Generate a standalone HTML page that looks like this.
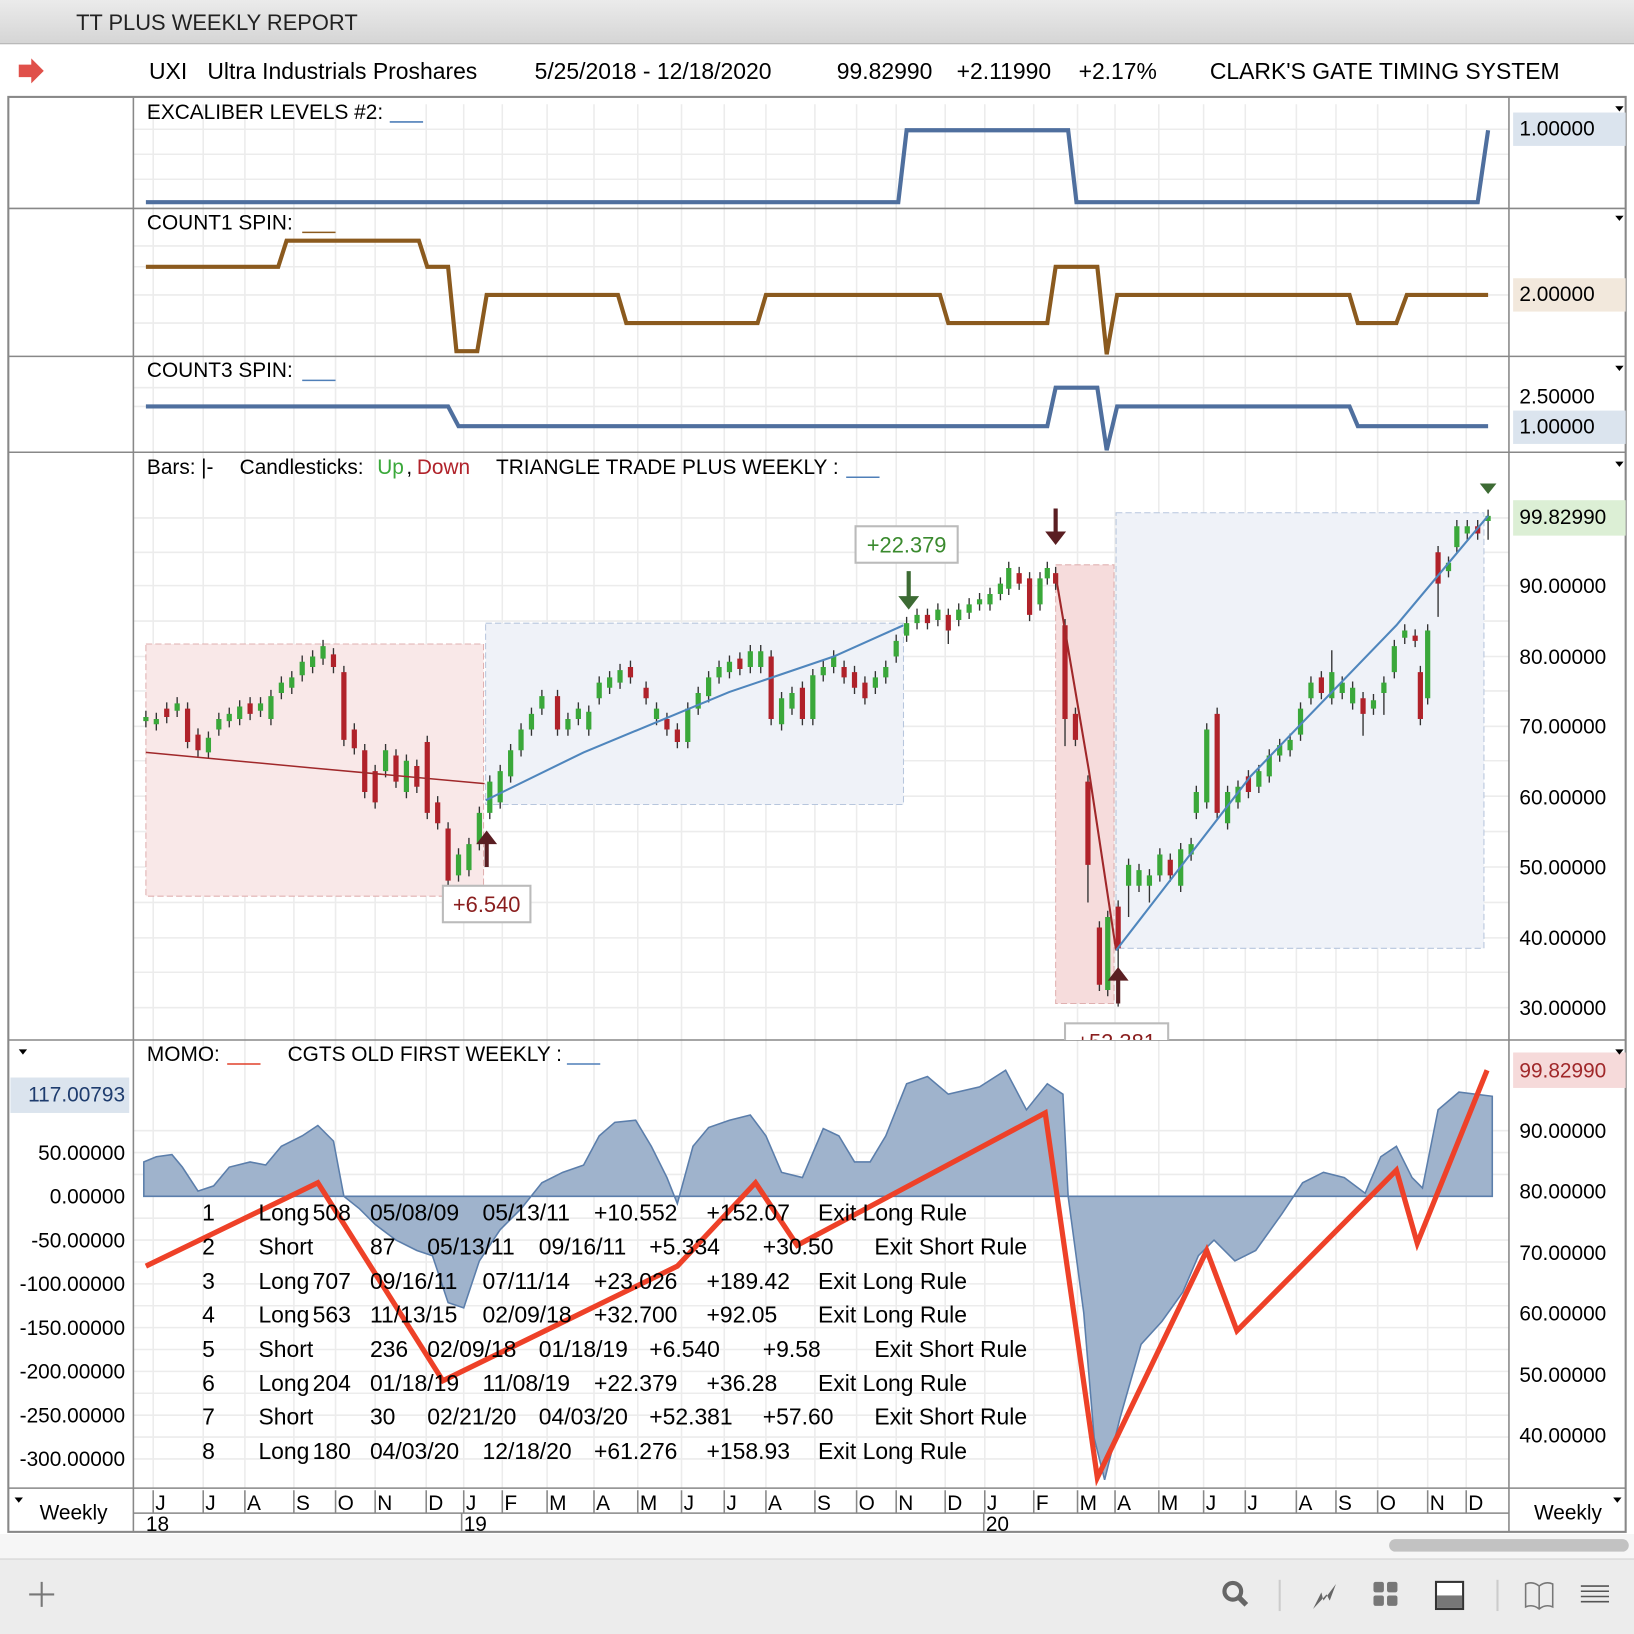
<!DOCTYPE html>
<html><head><meta charset="utf-8"><style>
html,body{margin:0;padding:0;background:#fff;}
svg{display:block;font-family:"Liberation Sans",Arial,sans-serif;}
</style></head><body>
<svg width="1634" height="1634" viewBox="0 0 1568 1568" xmlns="http://www.w3.org/2000/svg">
<defs><linearGradient id="tb" x1="0" y1="0" x2="0" y2="1"><stop offset="0" stop-color="#ebebeb"/><stop offset="1" stop-color="#d5d5d5"/></linearGradient>
<clipPath id="mc"><rect x="129" y="436" width="1319" height="562"/></clipPath></defs>
<rect x="0" y="0" width="1568" height="1568" fill="#fff"/>
<rect x="0" y="0" width="1568" height="42" fill="url(#tb)"/>
<line x1="0" y1="42" x2="1568" y2="42" stroke="#b0b0b0"/>
<text x="73" y="29" font-size="21" fill="#222">TT PLUS WEEKLY REPORT</text>
<path d="M18 62h12v-6l12 12-12 12v-6h-12z" fill="#e0504a"/>
<g font-size="22" fill="#000">
<text x="143" y="76">UXI</text><text x="199" y="76">Ultra Industrials Proshares</text>
<text x="513" y="76">5/25/2018 - 12/18/2020</text><text x="803" y="76">99.82990</text>
<text x="918" y="76">+2.11990</text><text x="1035" y="76">+2.17%</text>
<text x="1161" y="76">CLARK'S GATE TIMING SYSTEM</text></g>
<rect x="8" y="93" width="1552" height="1377" fill="none" stroke="#888" stroke-width="2"/>
<path stroke="#ececec" stroke-width="1.5" fill="none" d="M147 100V1428M195 100V1428M235 100V1428M282 100V1428M322 100V1428M360 100V1428M409 100V1428M445 100V1428M482 100V1428M525 100V1428M570 100V1428M612 100V1428M654 100V1428M695 100V1428M735 100V1428M782 100V1428M822 100V1428M860 100V1428M907 100V1428M945 100V1428M992 100V1428M1034 100V1428M1070 100V1428M1112 100V1428M1155 100V1428M1195 100V1428M1244 100V1428M1282 100V1428M1322 100V1428M1370 100V1428M1407 100V1428
M128 124H1448M128 148H1448M128 172H1448M128 236H1448M128 256H1448M128 283H1448M128 310H1448M128 372H1448M128 390H1448M128 497H1448M128 530H1448M128 562H1448M128 596H1448M128 630H1448M128 663H1448M128 697H1448M128 730H1448M128 764H1448M128 798H1448M128 832H1448M128 866H1448M128 900H1448M128 933H1448M128 967H1448M128 1085H1448M128 1106H1448M128 1127H1448M128 1169H1448M128 1190H1448M128 1211H1448M128 1232H1448M128 1253H1448M128 1274H1448M128 1295H1448M128 1316H1448M128 1337H1448M128 1358H1448M128 1379H1448M128 1400H1448"/>
<g stroke="#888" stroke-width="1.5" fill="none">
<line x1="128" y1="93" x2="128" y2="1470"/><line x1="1448" y1="93" x2="1448" y2="1470"/>
<line x1="8" y1="200" x2="1560" y2="200"/><line x1="8" y1="342" x2="1560" y2="342"/>
<line x1="8" y1="434" x2="1560" y2="434"/><line x1="8" y1="998" x2="1560" y2="998"/>
<line x1="8" y1="1428" x2="1560" y2="1428"/><line x1="128" y1="1452" x2="1448" y2="1452"/>
</g>
<g font-size="20" fill="#000">
<text x="141" y="114">EXCALIBER LEVELS #2:</text><line x1="374" y1="117" x2="406" y2="117" stroke="#4f7fb8" stroke-width="1.5"/>
<text x="141" y="220">COUNT1 SPIN:</text><line x1="290" y1="223" x2="322" y2="223" stroke="#8b5a1e" stroke-width="1.5"/>
<text x="141" y="362">COUNT3 SPIN:</text><line x1="290" y1="365" x2="322" y2="365" stroke="#4f7fb8" stroke-width="1.5"/>
<text x="141" y="455">Bars:</text><text x="193" y="455">|-</text><text x="230" y="455">Candlesticks:</text><text x="362" y="455" fill="#3aa83a">Up</text><text x="390" y="455">,</text><text x="400" y="455" fill="#b0222a">Down</text><text x="476" y="455">TRIANGLE TRADE PLUS WEEKLY :</text>
<line x1="812" y1="458" x2="844" y2="458" stroke="#4f7fb8" stroke-width="1.5"/>
<text x="141" y="1018">MOMO:</text><line x1="218" y1="1021" x2="250" y2="1021" stroke="#e0402a" stroke-width="1.5"/>
<text x="276" y="1018">CGTS OLD FIRST WEEKLY :</text><line x1="544" y1="1021" x2="576" y2="1021" stroke="#4f7fb8" stroke-width="1.5"/>
</g>
<polyline fill="none" stroke="#4f6f9e" stroke-width="4" points="140,194 862,194 870,125 1025,125 1033,194 1418,194 1428,125"/>
<polyline fill="none" stroke="#8b5a1e" stroke-width="4" points="140,256 267,256 275,231 402,231 410,256 430,256 438,337 458,337 467,283 593,283 601,310 727,310 735,283 902,283 910,310 1005,310 1013,256 1053,256 1062,340 1072,283 1295,283 1303,310 1340,310 1350,283 1428,283"/>
<polyline fill="none" stroke="#4f6f9e" stroke-width="4" points="140,390 430,390 440,409 1005,409 1013,372 1053,372 1062,432 1072,390 1295,390 1303,409 1428,409"/>
<g font-size="20" fill="#000">
<rect x="1452" y="108" width="108" height="32" fill="#dbe4ee"/><text x="1458" y="130">1.00000</text>
<rect x="1452" y="267" width="108" height="32" fill="#f2e8dc"/><text x="1458" y="289">2.00000</text>
<text x="1458" y="387">2.50000</text>
<rect x="1452" y="394" width="108" height="32" fill="#dbe4ee"/><text x="1458" y="416">1.00000</text>
<rect x="1452" y="480" width="108" height="34" fill="#dcefd5"/><text x="1458" y="503">99.82990</text>
<text x="1458" y="569">90.00000</text><text x="1458" y="637">80.00000</text><text x="1458" y="704">70.00000</text>
<text x="1458" y="772">60.00000</text><text x="1458" y="839">50.00000</text><text x="1458" y="907">40.00000</text><text x="1458" y="974">30.00000</text>
<rect x="1452" y="1010" width="108" height="34" fill="#f6dada"/><text x="1458" y="1034" fill="#a0282a">99.82990</text>
<text x="1458" y="1092">90.00000</text><text x="1458" y="1150">80.00000</text><text x="1458" y="1209">70.00000</text>
<text x="1458" y="1267">60.00000</text><text x="1458" y="1326">50.00000</text><text x="1458" y="1384">40.00000</text>
</g>
<g font-size="20" fill="#000" text-anchor="end">
<rect x="10" y="1034" width="114" height="34" fill="#dbe4ee"/><text x="120" y="1057" fill="#1e3c6e">117.00793</text>
<text x="120" y="1113">50.00000</text><text x="120" y="1155">0.00000</text><text x="120" y="1197">-50.00000</text>
<text x="120" y="1239">-100.00000</text><text x="120" y="1281">-150.00000</text><text x="120" y="1323">-200.00000</text>
<text x="120" y="1365">-250.00000</text><text x="120" y="1407">-300.00000</text>
</g>
<g clip-path="url(#mc)">
<rect x="140" y="618" width="324" height="242" fill="#f9e8e8" stroke="#e0b0b0" stroke-dasharray="6 3"/>
<rect x="466" y="598" width="401" height="174" fill="#eff2f8" stroke="#b7c6dd" stroke-dasharray="6 3"/>
<rect x="1013" y="542" width="56" height="421" fill="#f6dcdc" stroke="#e0b0b0" stroke-dasharray="6 3"/>
<rect x="1071" y="492" width="353" height="418" fill="#eff2f8" stroke="#b7c6dd" stroke-dasharray="6 3"/>
<path fill="none" stroke="#333" stroke-width="1.3" d="M140 682V698M150 684V701M160 674V694M170 669V688M180 674V718M190 699V726M200 702V728M210 684V706M220 679V698M230 672V696M240 669V691M250 669V688M260 662V696M270 649V671M280 644V666M290 629V654M300 624V646M310 614V638M320 622V646M330 639V716M340 694V724M350 714V766M360 734V776M370 714V746M380 719V756M390 724V766M400 729V761M410 706V786M420 764V796M430 789V851M440 814V846M450 804V841M460 774V816M470 744V786M480 734V776M490 714V751M500 694V726M510 679V706M520 662V686M535 662V706M545 684V706M555 674V696M565 677V706M575 649V676M585 644V666M595 637V661M605 634V656M620 654V676M630 674V696M640 684V706M650 694V718M660 674V718M670 659V686M680 644V674M690 634V656M700 629V651M710 626V648M720 619V646M730 619V646M740 624V696M750 664V701M760 659V686M770 654V696M780 642V696M790 634V654M800 624V646M810 634V656M820 639V666M830 649V676M840 644V666M850 634V656M860 609V636M870 592V616M880 584V604M890 584V604M900 579V601M910 584V618M920 579V601M930 574V594M940 569V586M950 564V586M960 554V576M968 539V571M978 544V566M988 549V596M998 549V586M1005 539V561M1013 544V566M1022 594V716M1032 679V716M1044 744V866M1055 884V951M1063 874V956M1073 864V966M1083 824V880M1093 829V856M1103 834V866M1113 814V846M1123 819V846M1133 809V856M1143 804V826M1148 754V786M1158 694V776M1168 679V786M1178 754V796M1188 749V776M1198 739V766M1208 734V761M1218 719V751M1228 709V731M1238 704V726M1248 674V711M1258 649V676M1268 644V671M1278 624V676M1288 649V671M1298 654V681M1308 664V706M1318 666V686M1328 649V686M1338 614V651M1348 599V618M1358 604V621M1363 639V696M1370 599V676M1380 524V592M1390 534V554M1398 499V531M1408 499V518M1418 499V518M1428 489V518"/>
<path fill="#3aa83a" d="M137.5 688h5v4h-5zM147.5 690h5v5h-5zM167.5 675h5v7h-5zM197.5 708h5v14h-5zM207.5 690h5v10h-5zM217.5 685h5v7h-5zM227.5 678h5v12h-5zM247.5 675h5v7h-5zM257.5 668h5v22h-5zM267.5 655h5v10h-5zM277.5 650h5v10h-5zM287.5 635h5v13h-5zM297.5 630h5v10h-5zM307.5 620h5v12h-5zM367.5 720h5v20h-5zM387.5 730h5v30h-5zM437.5 820h5v20h-5zM447.5 810h5v25h-5zM457.5 780h5v30h-5zM467.5 750h5v30h-5zM477.5 740h5v30h-5zM487.5 720h5v25h-5zM497.5 700h5v20h-5zM507.5 685h5v15h-5zM517.5 668h5v12h-5zM542.5 690h5v10h-5zM552.5 680h5v10h-5zM562.5 683h5v17h-5zM572.5 655h5v15h-5zM582.5 650h5v10h-5zM592.5 643h5v12h-5zM627.5 680h5v10h-5zM657.5 680h5v32h-5zM667.5 665h5v15h-5zM677.5 650h5v18h-5zM687.5 640h5v10h-5zM697.5 635h5v10h-5zM717.5 625h5v15h-5zM727.5 625h5v15h-5zM747.5 670h5v25h-5zM757.5 665h5v15h-5zM777.5 648h5v42h-5zM787.5 640h5v8h-5zM797.5 630h5v10h-5zM837.5 650h5v10h-5zM847.5 640h5v10h-5zM857.5 615h5v15h-5zM867.5 598h5v12h-5zM877.5 590h5v8h-5zM897.5 585h5v10h-5zM917.5 585h5v10h-5zM927.5 580h5v8h-5zM937.5 575h5v5h-5zM947.5 570h5v10h-5zM957.5 560h5v10h-5zM965.5 545h5v20h-5zM995.5 555h5v25h-5zM1002.5 545h5v10h-5zM1060.5 880h5v70h-5zM1080.5 830h5v20h-5zM1090.5 835h5v15h-5zM1100.5 840h5v10h-5zM1110.5 820h5v20h-5zM1130.5 815h5v35h-5zM1140.5 810h5v10h-5zM1145.5 760h5v20h-5zM1155.5 700h5v70h-5zM1175.5 760h5v30h-5zM1185.5 755h5v15h-5zM1205.5 740h5v15h-5zM1215.5 725h5v20h-5zM1225.5 715h5v10h-5zM1235.5 710h5v10h-5zM1245.5 680h5v25h-5zM1255.5 655h5v15h-5zM1275.5 645h5v25h-5zM1285.5 655h5v10h-5zM1295.5 660h5v15h-5zM1315.5 672h5v8h-5zM1325.5 655h5v10h-5zM1335.5 620h5v25h-5zM1345.5 605h5v7h-5zM1367.5 605h5v65h-5zM1387.5 540h5v8h-5zM1395.5 505h5v20h-5zM1405.5 505h5v7h-5zM1425.5 495h5v5h-5z"/>
<path fill="#b0222a" d="M157.5 680h5v8h-5zM177.5 680h5v32h-5zM187.5 705h5v15h-5zM237.5 675h5v10h-5zM317.5 628h5v12h-5zM327.5 645h5v65h-5zM337.5 700h5v18h-5zM347.5 720h5v40h-5zM357.5 740h5v30h-5zM377.5 725h5v25h-5zM397.5 735h5v20h-5zM407.5 712h5v68h-5zM417.5 770h5v20h-5zM427.5 795h5v50h-5zM532.5 668h5v32h-5zM602.5 640h5v10h-5zM617.5 660h5v10h-5zM637.5 690h5v10h-5zM647.5 700h5v12h-5zM707.5 632h5v10h-5zM737.5 630h5v60h-5zM767.5 660h5v30h-5zM807.5 640h5v10h-5zM817.5 645h5v15h-5zM827.5 655h5v15h-5zM887.5 590h5v8h-5zM907.5 590h5v15h-5zM975.5 550h5v10h-5zM985.5 555h5v35h-5zM1010.5 550h5v10h-5zM1019.5 600h5v90h-5zM1029.5 685h5v25h-5zM1041.5 750h5v80h-5zM1052.5 890h5v55h-5zM1070.5 870h5v40h-5zM1120.5 825h5v15h-5zM1165.5 685h5v95h-5zM1195.5 745h5v15h-5zM1265.5 650h5v15h-5zM1305.5 670h5v15h-5zM1355.5 610h5v5h-5zM1360.5 645h5v45h-5zM1377.5 530h5v30h-5zM1415.5 505h5v7h-5z"/>
<polyline fill="none" stroke="#a0282a" stroke-width="1.5" points="140,722 300,737 465,752"/>
<polyline fill="none" stroke="#4f86bd" stroke-width="2" points="466,768 560,722 700,664 800,630 867,600"/>
<polyline fill="none" stroke="#a0282a" stroke-width="2" points="1013,552 1045,740 1071,912"/>
<polyline fill="none" stroke="#4f86bd" stroke-width="2" points="1071,912 1200,745 1340,600 1428,495"/>
<rect x="821" y="505" width="98" height="35" fill="#fff" stroke="#bbb" stroke-width="2"/><text x="870" y="530" font-size="21" fill="#3a8a2e" text-anchor="middle">+22.379</text>
<rect x="425" y="850" width="84" height="35" fill="#fff" stroke="#bbb" stroke-width="2"/><text x="467" y="875" font-size="21" fill="#8a1e1e" text-anchor="middle">+6.540</text>
<rect x="1022" y="982" width="99" height="35" fill="#fff" stroke="#bbb" stroke-width="2"/><text x="1071" y="1007" font-size="21" fill="#8a1e1e" text-anchor="middle">+52.381</text>
<path d="M870 548v24h-8l10 13 10-13h-8v-24z" fill="#3d6b34"/>
<path d="M1011 488v22h-8l10 13 10-13h-8v-22z" fill="#5a1e22"/>
<path d="M465 832v-22h-8l10-13 10 13h-8v22z" fill="#5a1e22"/>
<path d="M1071 963v-22h-8l10-13 10 13h-8v22z" fill="#5a1e22"/>
<path d="M1420 464h16l-8 10z" fill="#3d6b34"/>
</g>
<polygon fill="#9fb3cc" stroke="#5b7eab" stroke-width="1.5" points="138,1148 138,1115 150,1110 165,1108 175,1120 190,1143 205,1138 220,1120 240,1115 255,1118 270,1100 290,1090 305,1080 320,1095 330,1148 345,1160 360,1175 380,1190 400,1200 415,1205 430,1250 445,1255 460,1210 480,1180 500,1160 520,1135 540,1125 560,1118 575,1090 590,1077 610,1075 625,1100 640,1130 650,1155 665,1100 680,1082 700,1075 720,1070 735,1090 750,1125 770,1130 790,1083 805,1090 820,1115 835,1115 850,1090 870,1040 890,1033 910,1050 940,1043 965,1027 985,1065 1005,1040 1020,1050 1025,1148 1040,1260 1050,1380 1060,1420 1075,1360 1095,1290 1115,1268 1135,1240 1150,1205 1165,1190 1185,1210 1205,1200 1230,1165 1250,1135 1270,1125 1290,1130 1310,1145 1325,1110 1340,1100 1355,1130 1365,1140 1380,1065 1400,1048 1432,1052 1432,1148"/>
<polyline fill="none" stroke="#ee4128" stroke-width="5" points="140,1215 305,1135 425,1325 650,1215 725,1135 765,1195 1003,1068 1053,1418 1158,1200 1187,1277 1340,1123 1360,1193 1427,1027"/>
<g font-size="22" fill="#000">
<text y="1171"><tspan x="194">1</tspan><tspan x="248">Long</tspan><tspan x="300">508</tspan><tspan x="355">05/08/09</tspan><tspan x="463">05/13/11</tspan><tspan x="570">+10.552</tspan><tspan x="678">+152.07</tspan><tspan x="785">Exit Long Rule</tspan></text>
<text y="1204"><tspan x="194">2</tspan><tspan x="248">Short</tspan><tspan x="355">87</tspan><tspan x="410">05/13/11</tspan><tspan x="517">09/16/11</tspan><tspan x="623">+5.334</tspan><tspan x="732">+30.50</tspan><tspan x="839">Exit Short Rule</tspan></text>
<text y="1237"><tspan x="194">3</tspan><tspan x="248">Long</tspan><tspan x="300">707</tspan><tspan x="355">09/16/11</tspan><tspan x="463">07/11/14</tspan><tspan x="570">+23.026</tspan><tspan x="678">+189.42</tspan><tspan x="785">Exit Long Rule</tspan></text>
<text y="1269"><tspan x="194">4</tspan><tspan x="248">Long</tspan><tspan x="300">563</tspan><tspan x="355">11/13/15</tspan><tspan x="463">02/09/18</tspan><tspan x="570">+32.700</tspan><tspan x="678">+92.05</tspan><tspan x="785">Exit Long Rule</tspan></text>
<text y="1302"><tspan x="194">5</tspan><tspan x="248">Short</tspan><tspan x="355">236</tspan><tspan x="410">02/09/18</tspan><tspan x="517">01/18/19</tspan><tspan x="623">+6.540</tspan><tspan x="732">+9.58</tspan><tspan x="839">Exit Short Rule</tspan></text>
<text y="1335"><tspan x="194">6</tspan><tspan x="248">Long</tspan><tspan x="300">204</tspan><tspan x="355">01/18/19</tspan><tspan x="463">11/08/19</tspan><tspan x="570">+22.379</tspan><tspan x="678">+36.28</tspan><tspan x="785">Exit Long Rule</tspan></text>
<text y="1367"><tspan x="194">7</tspan><tspan x="248">Short</tspan><tspan x="355">30</tspan><tspan x="410">02/21/20</tspan><tspan x="517">04/03/20</tspan><tspan x="623">+52.381</tspan><tspan x="732">+57.60</tspan><tspan x="839">Exit Short Rule</tspan></text>
<text y="1400"><tspan x="194">8</tspan><tspan x="248">Long</tspan><tspan x="300">180</tspan><tspan x="355">04/03/20</tspan><tspan x="463">12/18/20</tspan><tspan x="570">+61.276</tspan><tspan x="678">+158.93</tspan><tspan x="785">Exit Long Rule</tspan></text>
</g>
<path stroke="#888" stroke-width="1.5" d="M147 1430V1452M195 1430V1452M235 1430V1452M282 1430V1452M322 1430V1452M360 1430V1452M409 1430V1452M445 1430V1452M482 1430V1452M525 1430V1452M570 1430V1452M612 1430V1452M654 1430V1452M695 1430V1452M735 1430V1452M782 1430V1452M822 1430V1452M860 1430V1452M907 1430V1452M945 1430V1452M992 1430V1452M1034 1430V1452M1070 1430V1452M1112 1430V1452M1155 1430V1452M1195 1430V1452M1244 1430V1452M1282 1430V1452M1322 1430V1452M1370 1430V1452M1407 1430V1452M443 1452V1470M944 1452V1470"/>
<g font-size="20" fill="#000">
<text x="149" y="1449">J</text><text x="197" y="1449">J</text><text x="237" y="1449">A</text><text x="284" y="1449">S</text><text x="324" y="1449">O</text><text x="362" y="1449">N</text><text x="411" y="1449">D</text><text x="447" y="1449">J</text><text x="484" y="1449">F</text><text x="527" y="1449">M</text><text x="572" y="1449">A</text><text x="614" y="1449">M</text><text x="656" y="1449">J</text><text x="697" y="1449">J</text><text x="737" y="1449">A</text><text x="784" y="1449">S</text><text x="824" y="1449">O</text><text x="862" y="1449">N</text><text x="909" y="1449">D</text><text x="947" y="1449">J</text><text x="994" y="1449">F</text><text x="1036" y="1449">M</text><text x="1072" y="1449">A</text><text x="1114" y="1449">M</text><text x="1157" y="1449">J</text><text x="1197" y="1449">J</text><text x="1246" y="1449">A</text><text x="1284" y="1449">S</text><text x="1324" y="1449">O</text><text x="1372" y="1449">N</text><text x="1409" y="1449">D</text>
<text x="140" y="1469">18</text><text x="445" y="1469">19</text><text x="946" y="1469">20</text>
<text x="38" y="1458">Weekly</text><text x="1472" y="1458">Weekly</text></g>
<path d="M14 1437h8l-4 5z M1548 1437h8l-4 5z M18 1007h8l-4 5z M1550 1007h8l-4 5z M1550 443h8l-4 5z M1550 351h8l-4 5z M1550 207h8l-4 5z M1550 102h8l-4 5z" fill="#000"/>
<rect x="0" y="1472" width="1568" height="24" fill="#f6f6f6"/>
<rect x="1333" y="1477" width="230" height="12" rx="6" fill="#c2c2c2"/>
<rect x="0" y="1496" width="1568" height="72" fill="#ececec"/>
<line x1="0" y1="1496" x2="1568" y2="1496" stroke="#d0d0d0"/>
<path d="M40 1518v24M28 1530h24" stroke="#777" stroke-width="2"/>
<circle cx="1183" cy="1527" r="8" fill="none" stroke="#666" stroke-width="4"/><path d="M1189 1533l7 7" stroke="#666" stroke-width="5"/>
<line x1="1228" y1="1516" x2="1228" y2="1546" stroke="#ccc" stroke-width="2"/>
<path d="M1260 1544l8-16 2 8 12-16-6 16-3-6z" fill="#666"/>
<g fill="#777"><rect x="1318" y="1518" width="10" height="10" rx="2"/><rect x="1331" y="1518" width="10" height="10" rx="2"/><rect x="1318" y="1531" width="10" height="10" rx="2"/><rect x="1331" y="1531" width="10" height="10" rx="2"/></g>
<rect x="1378" y="1518" width="26" height="26" fill="#fff" stroke="#333" stroke-width="2"/><rect x="1379" y="1531" width="24" height="12" fill="#777"/>
<line x1="1437" y1="1516" x2="1437" y2="1546" stroke="#ccc" stroke-width="2"/>
<path d="M1464 1520q7-3 13 2q6-5 13-2v22q-7-3-13 2q-6-5-13-2z M1477 1522v22" fill="none" stroke="#777" stroke-width="1.5"/>
<path d="M1517 1522h27M1517 1527h27M1517 1532h27M1517 1537h27" stroke="#555" stroke-width="1.5"/>
</svg>
</body></html>
